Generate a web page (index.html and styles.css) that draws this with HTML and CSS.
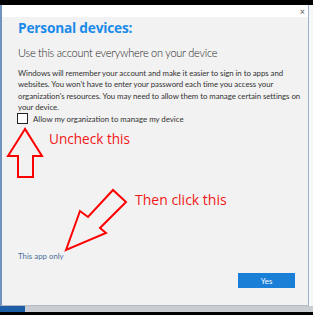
FILE: index.html
```html
<!DOCTYPE html>
<html lang="en">
<head>
<meta charset="UTF-8">
<title>Personal devices</title>
<link rel="stylesheet" href="styles.css">
</head>
<body>
<div class="screen">
    <div class="top-bar"></div>
    <div class="window">
        <div class="dialog">
            <div class="title-bar">
                <span class="close-btn">&#215;</span>
            </div>
            <div class="dialog-body">
                <h1 class="heading">Personal devices:</h1>
                <h2 class="subheading">Use this account everywhere on your device</h2>
                <p class="description">Windows will remember your account and make it easier to sign in to apps and websites. You won't have to enter your password each time you access your organization's resources. You may need to allow them to manage certain settings on your device.</p>
                <label class="check-row">
                    <span class="check-box"></span>
                    <span class="check-label">Allow my organization to manage my device</span>
                </label>
                <div class="spacer"></div>
                <a href="#" class="app-link">This app only</a>
                <div class="actions">
                    <button class="yes-btn">Yes</button>
                </div>
            </div>
        </div>
        <div class="side-strip"></div>
    </div>
    <div class="taskbar">
        <div class="taskbar-start"></div>
    </div>
    <div class="bottom-bar"></div>

    <svg class="annotations" width="313" height="315" viewBox="0 0 313 315">
        <polygon points="25,129 8,156 18,156 18,177 33,177 33,156 42,156" />
        <polygon points="66,250 80,211 88,217 113,190 126,202 100,228 106,233" />
    </svg>
    <span class="note note-uncheck">Uncheck this</span>
    <span class="note note-click">Then click this</span>
</div>
</body>
</html>
```

FILE: styles.css
```css
body {
    margin: 0;
    padding: 0;
    background-color: #000;
    font-family: Lato, 'Open Sans', sans-serif;
}
.screen {
    position: relative;
    width: 313px;
    height: 315px;
    display: flex;
    flex-direction: column;
    background-color: #000;
    overflow: hidden;
}
.top-bar {
    height: 5px;
    background-color: #000;
}
.window {
    display: flex;
    height: 301px;
}
.dialog {
    width: 306px;
    display: flex;
    flex-direction: column;
    border-left: 2px solid #6f92bf;
    border-right: 1px solid #9fb4cc;
    border-bottom: 1px solid #b5bcc4;
    background-color: #f2f2f2;
}
.side-strip {
    flex: 1;
    background-color: #f6f8fa;
}
.title-bar {
    height: 12px;
    background-color: #fff;
    display: flex;
    justify-content: flex-end;
    align-items: center;
    padding-right: 3px;
}
.close-btn {
    font-size: 9px;
    line-height: 1;
    color: #555;
}
.dialog-body {
    flex: 1;
    display: flex;
    flex-direction: column;
    padding: 0 2px 0 16px;
}
.heading {
    margin: 1px 0 0;
    font-family: 'Open Sans', sans-serif;
    font-size: 13.7px;
    font-weight: 700;
    line-height: 20px;
    color: #1b8ae8;
    letter-spacing: -0.2px;
}
.subheading {
    margin: 7px 0 0;
    font-size: 11px;
    font-weight: 300;
    line-height: 16px;
    color: #1e1e1e;
    letter-spacing: -0.25px;
}
.description {
    margin: 7px 0 0;
    font-size: 7.85px;
    line-height: 11.3px;
    color: #333;
    letter-spacing: -0.05px;
}
.check-row {
    display: flex;
    align-items: center;
    gap: 5px;
    margin-top: 0;
    margin-left: -1px;
}
.check-box {
    width: 9px;
    height: 9px;
    border: 1px solid #222;
    background-color: #fff;
}
.check-label {
    font-size: 7.85px;
    color: #333;
}
.spacer {
    flex: 1;
}
.app-link {
    font-size: 7.85px;
    color: #4d6f9c;
    text-decoration: none;
    margin-bottom: 12px;
}
.actions {
    display: flex;
    justify-content: flex-end;
    margin-right: 11px;
    margin-bottom: 17px;
}
.yes-btn {
    width: 57px;
    height: 15px;
    border: none;
    padding: 0;
    background-color: #1a7fd6;
    color: #fff;
    font-family: inherit;
    font-size: 7.85px;
}
.taskbar {
    height: 6px;
    background-color: #c7cdd3;
    display: flex;
}
.taskbar-start {
    width: 25px;
    background-color: #1d5fa6;
}
.bottom-bar {
    flex: 1;
    background-color: #000;
}
.annotations {
    position: absolute;
    top: 0;
    left: 0;
}
.annotations polygon {
    fill: none;
    stroke: #ff0000;
    stroke-width: 2;
    stroke-linejoin: miter;
}
.note {
    position: absolute;
    font-family: 'Open Sans', sans-serif;
    color: #f01818;
    line-height: 18px;
    white-space: nowrap;
}
.note-uncheck {
    left: 49px;
    top: 130px;
    font-size: 13.6px;
}
.note-click {
    left: 135px;
    top: 191px;
    font-size: 14px;
}
```
